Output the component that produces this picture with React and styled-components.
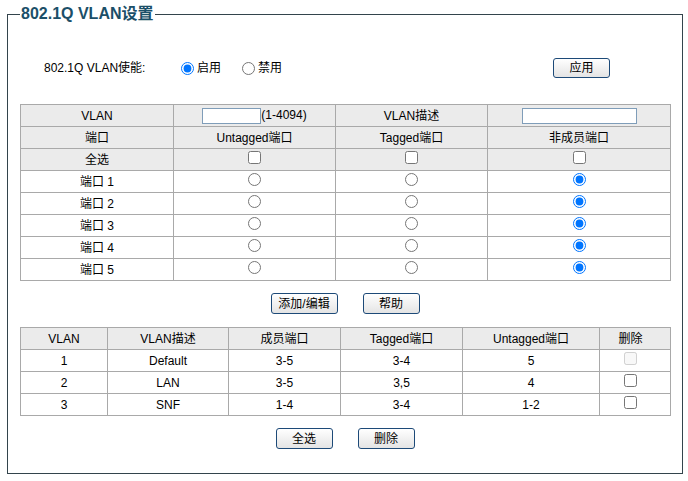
import React from "react";
import styled, { createGlobalStyle } from "styled-components";

const GlobalStyle = createGlobalStyle`
  html, body { margin: 0; padding: 0; background: #fff; }
  body {
    font-family: "Liberation Sans", Arial, "Noto Sans CJK SC", sans-serif;
    font-size: 12px;
    color: #000;
  }
`;

const Page = styled.div`
  padding: 4px 0 0 7px;
`;

const Fieldset = styled.fieldset`
  box-sizing: border-box;
  width: 676px;
  margin: 0;
  padding: 0 12px 24px;
  border: 1px solid #33444c;
  min-width: 0;
`;

const Legend = styled.legend`
  padding: 0 1px;
  font-size: 16px;
  line-height: 20px;
  font-weight: bold;
  color: #1b4f68;
`;

const EnableRow = styled.div`
  display: flex;
  align-items: center;
  height: 20px;
  margin-top: 34px;
  padding-left: 24px;
`;

const Label = styled.span`
  width: 134px;
  line-height: 16px;
`;

const RadioOption = styled.label`
  display: flex;
  align-items: center;
  margin-right: ${(p) => p.$gap || 0}px;
  line-height: 16px;
  input { margin: 0 3px 0 3px; width: 13px; height: 13px; }
`;

const Button = styled.button`
  box-sizing: border-box;
  width: ${(p) => p.$w || 57}px;
  height: 21px;
  padding: 0;
  border: 1px solid #1d4a78;
  border-radius: 3px;
  background: linear-gradient(#ffffff, #e4e4e4);
  font-family: inherit;
  font-size: 12px;
  line-height: 16px;
  color: #000;
`;

const ApplyButton = styled(Button)`
  height: 20px;
  margin-left: auto;
  margin-right: 60px;
`;

const Table = styled.table`
  width: 650px;
  border-collapse: collapse;
  table-layout: fixed;
  margin-top: ${(p) => p.$mt || 0}px;
`;

const Cell = styled.td`
  height: 21px;
  padding: 0 ${(p) => p.$pr || 0}px 0 0;
  border: 1px solid #a9a9a9;
  text-align: center;
  vertical-align: middle;
  line-height: 16px;
  background: ${(p) => (p.$head ? "#ebebeb" : "#fff")};
  input[type="radio"], input[type="checkbox"] { margin: 0 3px 5px 3px; vertical-align: middle; }
`;

const TextInput = styled.input`
  box-sizing: border-box;
  width: ${(p) => p.$w}px;
  height: 16px;
  margin: 0;
  padding: 0 2px;
  border: 1px solid #7f9db9;
  vertical-align: middle;
  font-size: 12px;
`;

const ButtonRow = styled.div`
  display: flex;
  justify-content: center;
  gap: 25px;
  margin-top: 12px;
`;

const ports = [1, 2, 3, 4, 5];
const vlans = [
  { id: "1", desc: "Default", member: "3-5", tagged: "3-4", untagged: "5", disabled: true },
  { id: "2", desc: "LAN", member: "3-5", tagged: "3,5", untagged: "4" },
  { id: "3", desc: "SNF", member: "1-4", tagged: "3-4", untagged: "1-2" },
];

export default function App() {
  return (
    <Page>
      <GlobalStyle />
      <Fieldset>
        <Legend>802.1Q VLAN设置</Legend>
        <EnableRow>
          <Label>802.1Q VLAN使能:</Label>
          <RadioOption $gap={18}>
            <input type="radio" name="enable" defaultChecked />启用
          </RadioOption>
          <RadioOption>
            <input type="radio" name="enable" />禁用
          </RadioOption>
          <ApplyButton>应用</ApplyButton>
        </EnableRow>

        <Table $mt={26}>
          <colgroup>
            <col style={{ width: 153 }} />
            <col style={{ width: 162 }} />
            <col style={{ width: 152 }} />
            <col style={{ width: 183 }} />
          </colgroup>
          <tbody>
            <tr>
              <Cell $head>VLAN</Cell>
              <Cell $head>
                <TextInput $w={59} />(1-4094)
              </Cell>
              <Cell $head>VLAN描述</Cell>
              <Cell $head>
                <TextInput $w={115} />
              </Cell>
            </tr>
            <tr>
              <Cell $head>端口</Cell>
              <Cell $head>Untagged端口</Cell>
              <Cell $head>Tagged端口</Cell>
              <Cell $head>非成员端口</Cell>
            </tr>
            <tr>
              <Cell $head>全选</Cell>
              <Cell $head><input type="checkbox" /></Cell>
              <Cell $head><input type="checkbox" /></Cell>
              <Cell $head><input type="checkbox" /></Cell>
            </tr>
            {ports.map((p) => (
              <tr key={p}>
                <Cell>端口 {p}</Cell>
                <Cell><input type="radio" name={`port${p}`} /></Cell>
                <Cell><input type="radio" name={`port${p}`} /></Cell>
                <Cell><input type="radio" name={`port${p}`} defaultChecked /></Cell>
              </tr>
            ))}
          </tbody>
        </Table>

        <ButtonRow>
          <Button $w={67}>添加/编辑</Button>
          <Button>帮助</Button>
        </ButtonRow>

        <Table $mt={13}>
          <colgroup>
            <col style={{ width: 87 }} />
            <col style={{ width: 121 }} />
            <col style={{ width: 112 }} />
            <col style={{ width: 122 }} />
            <col style={{ width: 137 }} />
            <col style={{ width: 71 }} />
          </colgroup>
          <tbody>
            <tr>
              <Cell $head>VLAN</Cell>
              <Cell $head>VLAN描述</Cell>
              <Cell $head>成员端口</Cell>
              <Cell $head>Tagged端口</Cell>
              <Cell $head>Untagged端口</Cell>
              <Cell $head $pr={9}>删除</Cell>
            </tr>
            {vlans.map((v) => (
              <tr key={v.id}>
                <Cell>{v.id}</Cell>
                <Cell>{v.desc}</Cell>
                <Cell>{v.member}</Cell>
                <Cell>{v.tagged}</Cell>
                <Cell>{v.untagged}</Cell>
                <Cell $pr={9}><input type="checkbox" disabled={v.disabled} /></Cell>
              </tr>
            ))}
          </tbody>
        </Table>

        <ButtonRow>
          <Button>全选</Button>
          <Button>删除</Button>
        </ButtonRow>
      </Fieldset>
    </Page>
  );
}
